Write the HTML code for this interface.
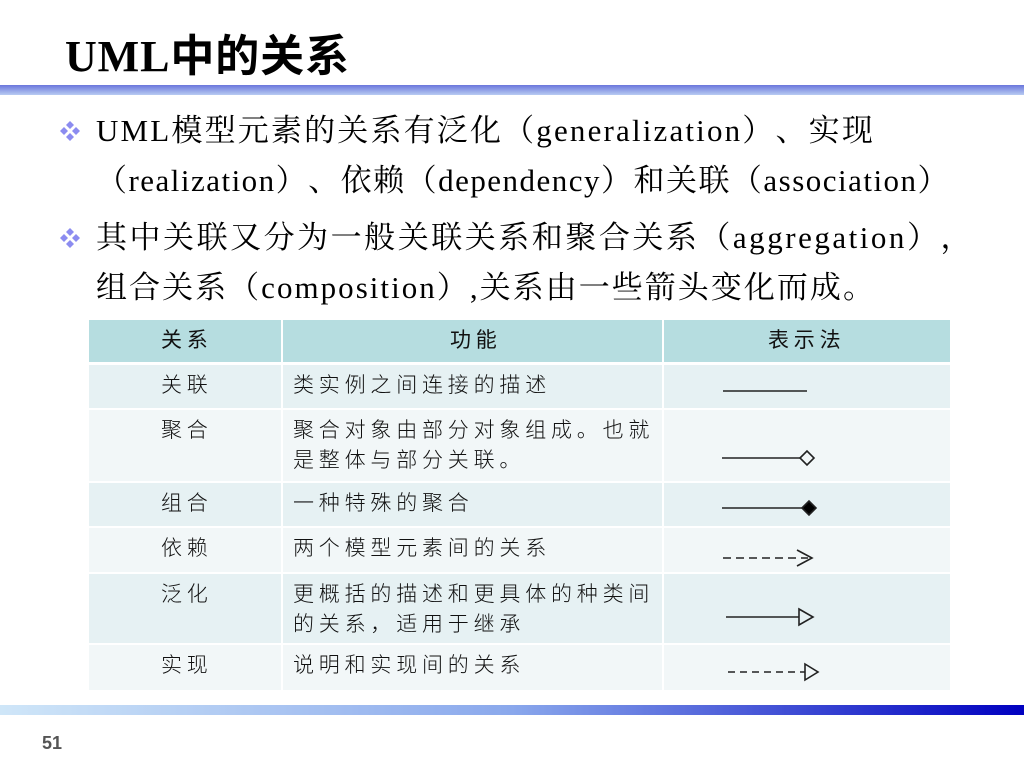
<!DOCTYPE html>
<html><head><meta charset="utf-8"><style>
*{margin:0;padding:0;box-sizing:border-box}
body{width:1024px;height:768px;background:#fff;position:relative;overflow:hidden;font-family:"Liberation Serif","Noto Serif CJK SC",serif;color:#000;text-spacing-trim:space-all;font-kerning:none}
.abs{position:absolute}
.title{left:65px;top:20px;font-size:44px;font-weight:bold;font-family:"Liberation Serif","Noto Sans CJK SC",serif;white-space:nowrap}
.bar1{left:0;top:85px;width:1024px;height:10px;background:linear-gradient(to bottom,#6a76dc,#b8cbf2)}
.bar2{left:0;top:705px;width:1024px;height:10px;background:linear-gradient(to right,#cfe6f8,#8aa8ec 50%,#0000c0)}
.p{font-size:31px;white-space:nowrap;line-height:50px}
.dia{width:24px;height:24px}
.cell{position:absolute;font-family:"Liberation Sans","Noto Sans CJK SC",sans-serif;font-size:21px;letter-spacing:4.8px;line-height:30px;padding-top:6px;color:#111;font-weight:300}
.num{left:42px;top:733px;font-family:"Liberation Sans",sans-serif;font-size:18px;font-weight:bold;color:#555}
</style></head><body>
<div class="abs title fit" style="--w:285">UML中的关系</div>
<div class="abs bar1"></div>
<svg class="abs dia" style="left:58px;top:119px" viewBox="0 0 24 24"><g fill="#8c8cf0"><path d="M12 2l4 4-4 4-4-4z"/><path d="M12 14l4 4-4 4-4-4z"/><path d="M6 8l4 4-4 4-4-4z"/><path d="M18 8l4 4-4 4-4-4z"/></g></svg>
<div class="abs p fit" style="left:96px;top:106px;--w:779">UML模型元素的关系有泛化（generalization）、实现</div>
<div class="abs p fit" style="left:96px;top:156px;--w:854">（realization）、依赖（dependency）和关联（association）</div>
<svg class="abs dia" style="left:58px;top:226px" viewBox="0 0 24 24"><g fill="#8c8cf0"><path d="M12 2l4 4-4 4-4-4z"/><path d="M12 14l4 4-4 4-4-4z"/><path d="M6 8l4 4-4 4-4-4z"/><path d="M18 8l4 4-4 4-4-4z"/></g></svg>
<div class="abs p fit" style="left:96px;top:213px;--w:878">其中关联又分为一般关联关系和聚合关系（aggregation），</div>
<div class="abs p fit" style="left:96px;top:263px;--w:780">组合关系（composition）,关系由一些箭头变化而成。</div>

<div class="abs" style="left:89px;top:320px;width:192px;height:42px;background:#b6dde0"></div>
<div class="abs" style="left:283px;top:320px;width:379px;height:42px;background:#b6dde0"></div>
<div class="abs" style="left:664px;top:320px;width:286px;height:42px;background:#b6dde0"></div>
<div class="cell" style="left:161px;top:320px;font-weight:normal">关系</div>
<div class="cell" style="left:450px;top:320px;font-weight:normal">功能</div>
<div class="cell" style="left:768px;top:320px;font-weight:normal">表示法</div>

<div class="abs" style="left:89px;top:365px;width:861px;height:43px;background:#e6f1f3"></div>
<div class="abs" style="left:89px;top:410px;width:861px;height:71px;background:#f2f7f8"></div>
<div class="abs" style="left:89px;top:483px;width:861px;height:43px;background:#e6f1f3"></div>
<div class="abs" style="left:89px;top:528px;width:861px;height:44px;background:#f2f7f8"></div>
<div class="abs" style="left:89px;top:574px;width:861px;height:69px;background:#e6f1f3"></div>
<div class="abs" style="left:89px;top:645px;width:861px;height:45px;background:#f2f7f8"></div>
<div class="abs" style="left:281px;top:365px;width:2px;height:325px;background:#fff"></div>
<div class="abs" style="left:662px;top:365px;width:2px;height:325px;background:#fff"></div>

<div class="cell" style="left:161px;top:365px">关联</div>
<div class="cell" style="left:293px;top:365px">类实例之间连接的描述</div>
<div class="cell" style="left:161px;top:410px">聚合</div>
<div class="cell" style="left:293px;top:410px">聚合对象由部分对象组成。也就<br>是整体与部分关联。</div>
<div class="cell" style="left:161px;top:483px">组合</div>
<div class="cell" style="left:293px;top:483px">一种特殊的聚合</div>
<div class="cell" style="left:161px;top:528px">依赖</div>
<div class="cell" style="left:293px;top:528px">两个模型元素间的关系</div>
<div class="cell" style="left:161px;top:574px">泛化</div>
<div class="cell" style="left:293px;top:574px">更概括的描述和更具体的种类间<br>的关系，适用于继承</div>
<div class="cell" style="left:161px;top:645px">实现</div>
<div class="cell" style="left:293px;top:645px">说明和实现间的关系</div>

<svg class="abs" style="left:660px;top:360px" width="300" height="340">
<g stroke="#222" stroke-width="1.6" fill="none">
<line x1="63" y1="31" x2="147" y2="31"/>
<line x1="62" y1="98" x2="140" y2="98"/><path d="M140 98l7-7 7 7-7 7z"/>
<line x1="62" y1="148" x2="142" y2="148"/><path d="M142 148l7-7 7 7-7 7z" fill="#000"/>
<line x1="63" y1="198" x2="148" y2="198" stroke-dasharray="8 5"/><path d="M137 190l15 8-15 8"/>
<line x1="66" y1="257" x2="139" y2="257"/><path d="M139 249l14 8-14 8z"/>
<line x1="68" y1="312" x2="145" y2="312" stroke-dasharray="7 5"/><path d="M145 304l13 8-13 8z"/>
</g></svg>

<div class="abs bar2"></div>
<div class="abs num">51</div>
<script>
document.querySelectorAll('.fit').forEach(function(e){
  var w=parseFloat(getComputedStyle(e).getPropertyValue('--w'));
  var n=e.textContent.length;
  var cur=e.getBoundingClientRect().width;
  if(w&&n>1){e.style.letterSpacing=((w-cur)/n)+'px';}
});
</script>
</body></html>
